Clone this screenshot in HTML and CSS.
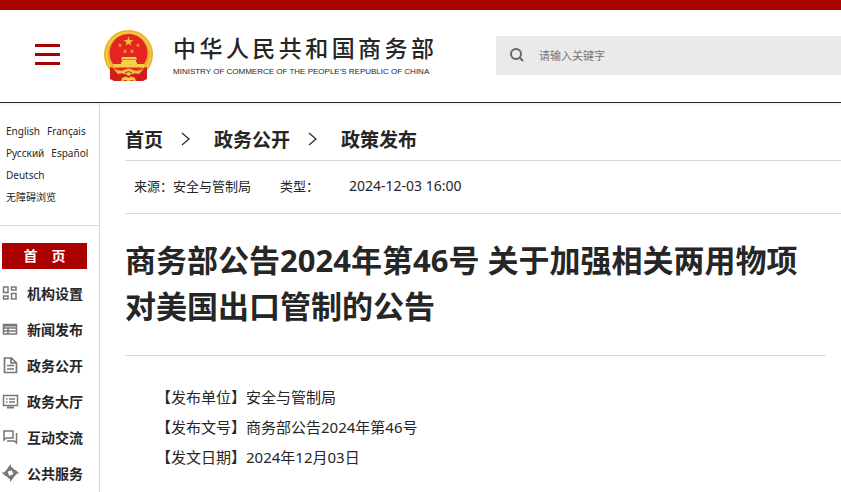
FILE: index.html
```html
<!DOCTYPE html>
<html lang="zh-CN">
<head>
    <meta charset="UTF-8">
    <meta name="viewport" content="width=device-width, initial-scale=1.0">
    <title>商务部公告2024年第46号</title>
    <link rel="stylesheet" href="styles.css">
</head>
<body>
    <header class="header">
        <button class="menu-btn" type="button" aria-label="菜单">
            <span></span><span></span><span></span>
        </button>
        <a class="logo" href="#">
            <svg class="emblem" viewBox="0 0 50 53" aria-hidden="true">
                <circle cx="24.500" cy="24.500" r="24.500" fill="#e8b02b"/>
                <circle cx="24.500" cy="24.500" r="22" fill="none" stroke="#f3c944" stroke-width="2"/>
                <path d="M6 37 L20 41 L16 51 L10 51 L6 49z M43 37 L29 41 L33 51 L39 51 L43 49z" fill="#cf1f1c"/>
                <path d="M16 44 H33 V51 H16z" fill="#d6201d"/>
                <circle cx="24.500" cy="23" r="19" fill="#e52521"/>
                <path d="M24.500 6.500 L25.700 10 L29.400 10.100 L26.500 12.400 L27.500 15.800 L24.500 13.800 L21.500 15.800 L22.500 12.400 L19.600 10.100 L23.300 10z" fill="#f3b93a"/>
                <g fill="#f0a035">
                    <path id="small-star" d="M16 13 L16.600 14.500 L18.200 14.600 L17 15.600 L17.400 17.200 L16 16.300 L14.600 17.200 L15 15.600 L13.800 14.600 L15.400 14.500z"/>
                    <use href="#small-star" x="18"/>
                    <use href="#small-star" x="5" y="6"/>
                    <use href="#small-star" x="12" y="6"/>
                </g>
                <path d="M18 27 H32 L33 29.500 H17z M18 30 H32 V32 H33 V34 H17 V32 H18z" fill="#f7cf4a"/>
                <path d="M9 34 H41 L39 38 H11z" fill="#f5cc45"/>
                <path d="M11 38 H38" stroke="#e52521" stroke-width="1"/>
                <path d="M9 38.500 Q16 42 20 40 Q24.500 37 29 40 Q33 42 40 38.500 L35 44 L29 43 L24.500 46 L20 43 L14 44z" fill="#efc040"/>
                <path d="M17 51.500 L18 48 L22 46.500 L24.500 48 L27 46.500 L31 48 L32 51.500 L28 50 L24.500 51 L21 50z" fill="#f5cf45"/>
                <path d="M21 43 Q24.500 40 28 43" fill="none" stroke="#d6201d" stroke-width="1"/>
            </svg>
            <span class="logo-text">
                <span class="logo-cn">中华人民共和国商务部</span>
                <span class="logo-en">MINISTRY OF COMMERCE OF THE PEOPLE'S REPUBLIC OF CHINA</span>
            </span>
        </a>
        <form class="search">
            <button class="search-btn" type="button" aria-label="搜索">
                <svg width="14" height="14" viewBox="0 0 14 14" fill="none" stroke="#666" stroke-width="2">
                    <circle cx="6" cy="6" r="5"/>
                    <path d="M9.500 9.500 L13 13"/>
                </svg>
            </button>
            <input type="text" placeholder="请输入关键字" aria-label="请输入关键字">
        </form>
    </header>

    <div class="layout">
        <aside class="sidebar">
            <div class="langs">
                <div><a href="#">English</a><a href="#">Français</a></div>
                <div><a href="#">Русский</a><a href="#">Español</a></div>
                <div><a href="#">Deutsch</a></div>
                <div><a href="#">无障碍浏览</a></div>
            </div>
            <nav class="nav">
                <a class="nav-home" href="#">首　页</a>
                <a class="nav-item" href="#">
                    <svg viewBox="0 0 18 18" fill="none" stroke="#777" stroke-width="1.500"><path d="M2.500 3h4.500v5.500h-4.500z M10.500 3h4.500v3h-4.500z M10.500 9.500h4.500v5.500h-4.500z M2.500 12h4.500v3h-4.500z"/></svg>
                    机构设置
                </a>
                <a class="nav-item" href="#">
                    <svg viewBox="0 0 18 18" fill="none" stroke="#777" stroke-width="1.500"><path d="M2.500 4.500h13v9.500h-13z M2 8h14 M2 11h14 M7 8v6"/><path d="M2 5.500h14" stroke-width="2"/></svg>
                    新闻发布
                </a>
                <a class="nav-item" href="#">
                    <svg viewBox="0 0 18 18" fill="none" stroke="#777" stroke-width="1.700"><path d="M3.500 2h7l5 5v9.500h-12z M10 2v5h5 M6 9.500h7 M6 13h7"/></svg>
                    政务公开
                </a>
                <a class="nav-item" href="#">
                    <svg viewBox="0 0 18 18" fill="none" stroke="#777" stroke-width="1.500"><path d="M2.500 3.500h14v10h-14z M5 7h1.500 M8 7h6 M5 10h1.500 M8 10h6"/><path d="M6 15.500h7" stroke-width="2"/></svg>
                    政务大厅
                </a>
                <a class="nav-item" href="#">
                    <svg viewBox="0 0 18 18" fill="none" stroke="#777" stroke-width="1.500"><path d="M3 3h9v7h-7l-2 2z M15.500 5v10l-2-2h-7.500"/></svg>
                    互动交流
                </a>
                <a class="nav-item" href="#">
                    <svg viewBox="0 0 18 18" fill="#777">
                        <path id="blade" d="M10 0 V2.500 L15 7 L12 9.500 L11 6.500 L8 6 L6.500 4z"/>
                        <use href="#blade" transform="rotate(90 9.500 9)"/>
                        <use href="#blade" transform="rotate(180 9.500 9)"/>
                        <use href="#blade" transform="rotate(270 9.500 9)"/>
                    </svg>
                    公共服务
                </a>
            </nav>
        </aside>

        <main class="main">
            <nav class="breadcrumb">
                <a href="#">首页</a>
                <svg class="arrow" viewBox="0 0 9 14"><path d="M1 1 L8 7 L1 13"/></svg>
                <a href="#">政务公开</a>
                <svg class="arrow" viewBox="0 0 9 14"><path d="M1 1 L8 7 L1 13"/></svg>
                <a href="#">政策发布</a>
            </nav>
            <div class="meta">
                <span class="source">来源：安全与管制局</span>
                <span class="type">类型：</span>
                <time datetime="2024-12-03T16:00">2024-12-03 16:00</time>
            </div>
            <article class="article">
                <h1>商务部公告2024年第46号 关于加强相关两用物项对美国出口管制的公告</h1>
                <div class="content">
                    <p>【发布单位】安全与管制局</p>
                    <p>【发布文号】商务部公告2024年第46号</p>
                    <p>【发文日期】2024年12月03日</p>
                </div>
            </article>
        </main>
    </div>
</body>
</html>
```

FILE: styles.css
```css
* {
    box-sizing: border-box;
}
body {
    margin: 0;
    min-height: 100vh;
    display: flex;
    flex-direction: column;
    border-top: 10px solid #ab0000;
    background: #fff;
    color: #262626;
    font-family: "Noto Sans", "Noto Sans CJK SC", sans-serif;
}
a {
    color: inherit;
    text-decoration: none;
}
button {
    padding: 0;
    border: 0;
    background: none;
    cursor: pointer;
}

/* header */
.header {
    display: flex;
    align-items: center;
    height: 93px;
    padding-left: 35px;
    border-bottom: 1px solid #262626;
    box-shadow: 0 1px 4px rgba(0, 0, 0, 0.08);
}
.menu-btn {
    display: flex;
    flex-direction: column;
    gap: 6px;
    width: 25px;
    margin: 0 44px 4px 0;
}
.menu-btn span {
    height: 3px;
    background: #ab0000;
}
.logo {
    display: flex;
    align-items: center;
    gap: 19px;
}
.emblem {
    width: 50px;
    height: 53px;
}
.logo-text {
    display: flex;
    flex-direction: column;
    width: 261px;
}
.logo-cn {
    font-size: 23px;
    line-height: 32px;
    font-weight: 500;
    font-family: "Noto Sans CJK SC", sans-serif;
    text-align: justify;
    text-align-last: justify;
}
.logo-en {
    font-family: "Liberation Sans", Arial, sans-serif;
    font-size: 8px;
    line-height: 18px;
    white-space: nowrap;
}
.search {
    display: flex;
    flex: 1;
    align-items: center;
    height: 39px;
    margin: 0 0 2px 62px;
    padding-left: 14px;
    background: #eaeaea;
}
.search-btn {
    display: flex;
}
.search input {
    flex: 1;
    min-width: 0;
    height: 39px;
    padding: 0 15px;
    border: 0;
    outline: 0;
    background: transparent;
    font-family: inherit;
    font-size: 11px;
}
.search input::placeholder {
    color: #757575;
}

.layout {
    display: flex;
    flex: 1;
}

/* sidebar */
.sidebar {
    flex: none;
    width: 100px;
    border-right: 1px solid #d9d9d9;
}
.langs {
    padding: 17px 0 17px 6px;
    border-bottom: 1px solid #d9d9d9;
    font-size: 10px;
    line-height: 22px;
    white-space: nowrap;
}
.langs div {
    display: flex;
    gap: 7px;
}
.nav {
    padding: 17px 0 0 2px;
}
.nav-home {
    display: block;
    width: 85px;
    margin-bottom: 6px;
    background: #ab0000;
    color: #fff;
    font-size: 14px;
    font-weight: bold;
    line-height: 26px;
    text-align: center;
}
.nav-item {
    display: flex;
    align-items: center;
    gap: 8px;
    height: 36px;
    font-size: 14px;
    font-weight: bold;
}
.nav-item svg {
    width: 18px;
    height: 18px;
    margin-left: -1px;
}

/* content */
.main {
    flex: 1;
    min-width: 0;
    padding-left: 25px;
}
.breadcrumb {
    display: flex;
    align-items: center;
    height: 58px;
    padding-top: 14px;
    border-bottom: 1px solid #d9d9d9;
    font-size: 19px;
    font-weight: bold;
}
.arrow {
    width: 9px;
    height: 14px;
    margin: 0 24px 0 18px;
    fill: none;
    stroke: #262626;
    stroke-width: 1.2;
}
.meta {
    display: flex;
    align-items: center;
    height: 53px;
    padding: 0 0 3px 9px;
    border-bottom: 1px solid #d9d9d9;
    font-size: 13px;
}
.source {
    margin-right: 29px;
}
.type {
    margin-right: 30px;
}
.meta time {
    font-size: 14px;
}
.article {
    margin-right: 15px;
}
.article h1 {
    margin: 0;
    padding: 23px 0 26px;
    border-bottom: 1px solid #d9d9d9;
    font-size: 31px;
    line-height: 46px;
}
.content {
    padding: 26px 0 0 31px;
    font-size: 15px;
    line-height: 30px;
}
.content p {
    margin: 0;
}
```
